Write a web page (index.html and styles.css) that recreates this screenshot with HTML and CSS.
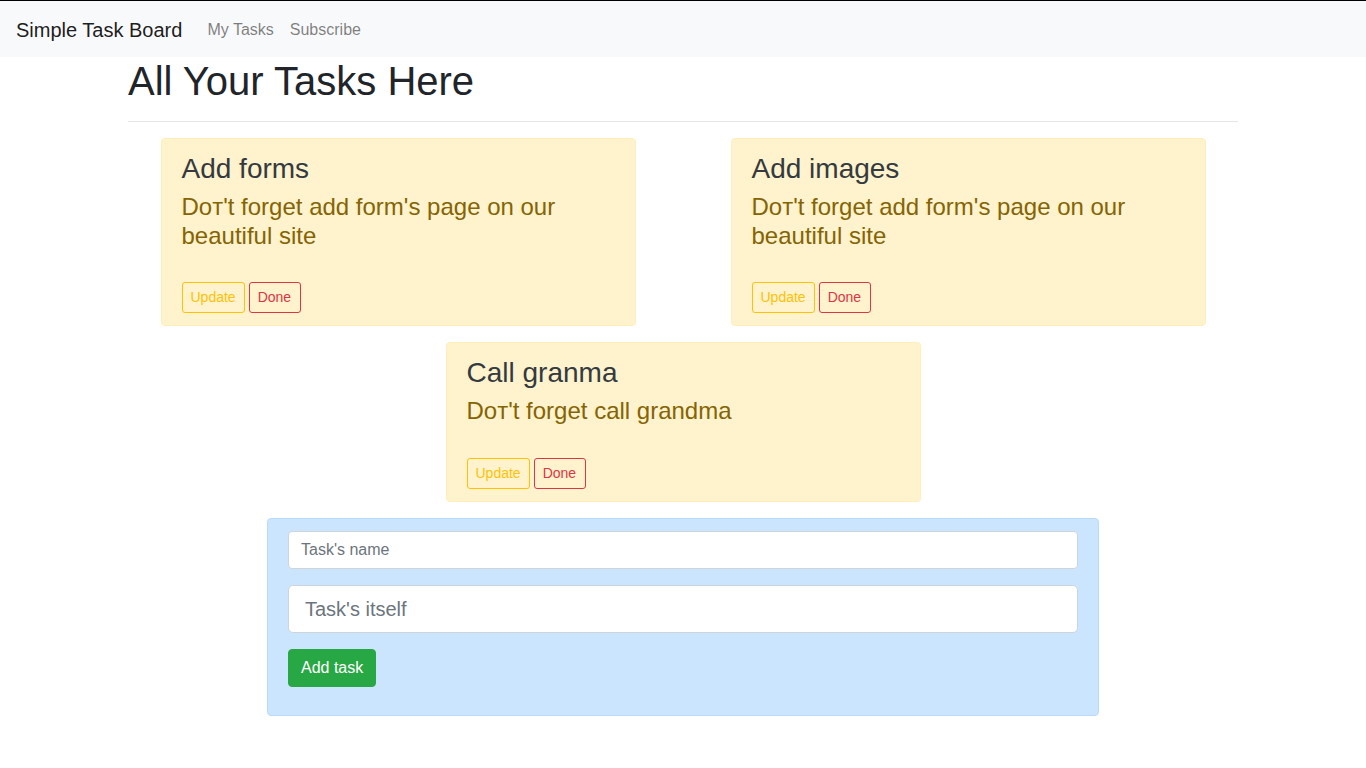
FILE: index.html
```html
<!DOCTYPE html>
<html lang="en">
<head>
<meta charset="utf-8">
<title>Simple Task Board</title>
<link rel="stylesheet" href="styles.css">
</head>
<body>
<nav class="navbar">
  <a class="brand" href="#">Simple Task Board</a>
  <a class="nav-link" href="#">My Tasks</a>
  <a class="nav-link" href="#">Subscribe</a>
</nav>
<main class="container">
  <h1 class="page-title">All Your Tasks Here</h1>
  <hr class="divider">
  <div class="task-row">
    <div class="task-col">
      <div class="task-card">
        <h3 class="task-title">Add forms</h3>
        <h4 class="task-text">Doт't forget add form's page on our beautiful site</h4>
        <div class="task-actions">
          <button class="btn btn-sm btn-outline-warning">Update</button>
          <button class="btn btn-sm btn-outline-danger">Done</button>
        </div>
      </div>
    </div>
    <div class="task-col">
      <div class="task-card">
        <h3 class="task-title">Add images</h3>
        <h4 class="task-text">Doт't forget add form's page on our beautiful site</h4>
        <div class="task-actions">
          <button class="btn btn-sm btn-outline-warning">Update</button>
          <button class="btn btn-sm btn-outline-danger">Done</button>
        </div>
      </div>
    </div>
    <div class="task-col task-col-full">
      <div class="task-card">
        <h3 class="task-title">Call granma</h3>
        <h4 class="task-text">Doт't forget call grandma</h4>
        <div class="task-actions">
          <button class="btn btn-sm btn-outline-warning">Update</button>
          <button class="btn btn-sm btn-outline-danger">Done</button>
        </div>
      </div>
    </div>
  </div>
  <form class="task-form">
    <div class="form-group">
      <input class="form-control" type="text" placeholder="Task's name">
    </div>
    <div class="form-group">
      <input class="form-control form-control-lg" type="text" placeholder="Task's itself">
    </div>
    <button type="button" class="btn btn-success">Add task</button>
  </form>
</main>
</body>
</html>
```

FILE: styles.css
```css
* { box-sizing: border-box; }

html, body {
  margin: 0;
  padding: 0;
}

body {
  font-family: "Liberation Sans", Arial, sans-serif;
  font-size: 16px;
  line-height: 1.5;
  color: #212529;
  background: #fff;
}

.navbar {
  display: flex;
  align-items: center;
  padding: 9px 16px 7px 16px;
  background: #f8f9fa;
  border-top: 1px solid #000;
}

.brand {
  font-size: 20px;
  line-height: 30px;
  padding: 5px 0;
  margin-right: 17px;
  color: rgba(0, 0, 0, 0.9);
  text-decoration: none;
}

.nav-link {
  padding: 8px;
  color: rgba(0, 0, 0, 0.5);
  text-decoration: none;
  line-height: 24px;
}

.container {
  width: 1140px;
  margin: 0 auto;
  padding: 0 15px;
}

.page-title {
  margin: 0;
  font-size: 40px;
  font-weight: 500;
  line-height: 1.2;
}

.divider {
  margin: 16px 0;
  border: 0;
  border-top: 1px solid rgba(0, 0, 0, 0.1);
}

.task-row {
  display: flex;
  flex-wrap: wrap;
  margin: 0 -15px;
}

.task-col {
  width: 50%;
  padding: 0 15px;
}

.task-col-full {
  width: 100%;
}

.task-card {
  width: 475px;
  margin: 0 auto 16px;
  padding: 12px 20px;
  background: #fff3cd;
  border: 1px solid #ffeeba;
  border-radius: 4px;
  color: #856404;
}

.task-title {
  margin: 0 0 6px;
  font-size: 28px;
  font-weight: 500;
  line-height: 35px;
  color: #343a40;
}

.task-text {
  margin: 0 0 8px;
  font-size: 24px;
  font-weight: 500;
  line-height: 29px;
  color: #856404;
}

.task-actions {
  display: flex;
  gap: 4px;
  margin-top: 32px;
}

.task-col-full .task-actions {
  margin-top: 33px;
}

.btn {
  display: inline-block;
  font-family: inherit;
  font-weight: 400;
  text-align: center;
  border: 1px solid transparent;
  background: transparent;
  cursor: pointer;
  padding: 6px 12px;
  font-size: 16px;
  line-height: 1.5;
  border-radius: 4px;
}

.btn-sm {
  padding: 4px 8px;
  font-size: 14px;
  line-height: 1.5;
  border-radius: 3px;
}

.btn-outline-warning {
  color: #ffc107;
  border-color: #ffc107;
}

.btn-outline-danger {
  color: #dc3545;
  border-color: #dc3545;
  padding-right: 9px;
}

.btn-success {
  color: #fff;
  background: #28a745;
  border-color: #28a745;
  margin-bottom: 16px;
}

.task-form {
  width: 832px;
  margin: 0 auto;
  padding: 12px 20px;
  background: #cce5ff;
  border: 1px solid #b8daff;
  border-radius: 4px;
}

.form-group {
  margin-bottom: 16px;
}

.form-control {
  display: block;
  width: 100%;
  height: 38px;
  padding: 6px 12px;
  font-family: inherit;
  font-size: 16px;
  line-height: 1.5;
  color: #495057;
  background: #fff;
  border: 1px solid #ced4da;
  border-radius: 4px;
}

.form-control::placeholder {
  color: #6c757d;
  opacity: 1;
}

.form-control-lg {
  height: 48px;
  padding: 8px 16px;
  font-size: 20px;
  border-radius: 5px;
}
```
